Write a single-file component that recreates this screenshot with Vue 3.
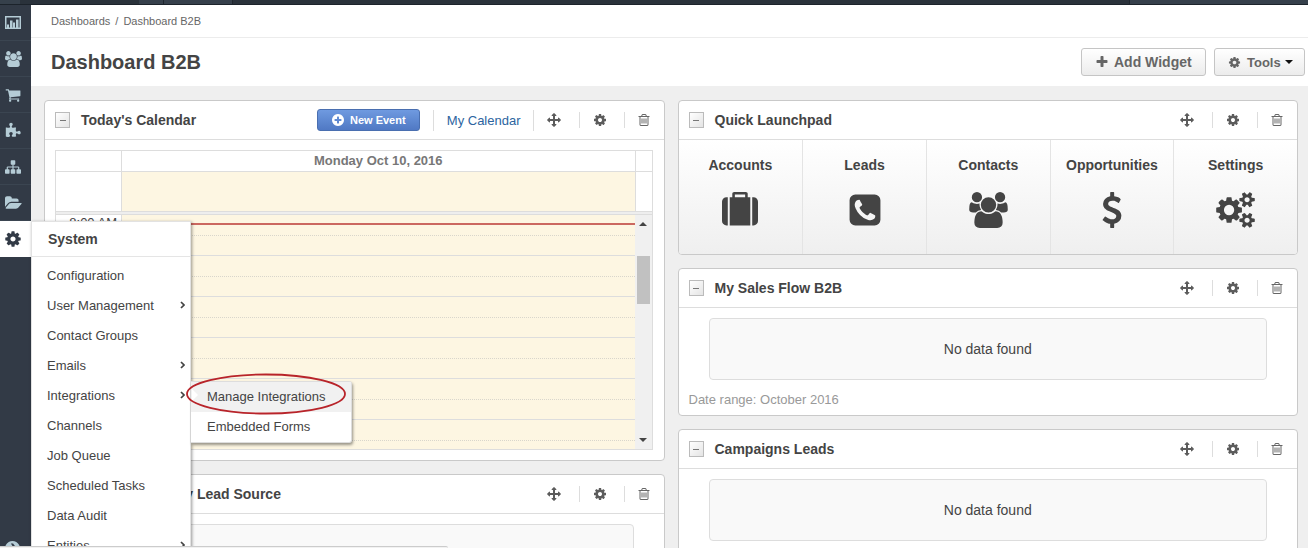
<script setup>
import { h } from 'vue'

const glyphs = {
  cog: [1792, 'M1152 896q0-106-75-181t-181-75-181 75-75 181 75 181 181 75 181-75 75-181zm512-109v222q0 12-8 23t-20 13l-185 28q-19 54-39 91 35 50 107 138 10 12 10 25t-9 23q-27 37-99 108t-94 71q-12 0-26-9l-138-108q-44 23-91 38-16 136-29 186-7 28-36 28h-222q-14 0-24.500-8.500t-11.500-21.500l-28-184q-49-16-90-37l-141 107q-10 9-25 9-14 0-25-11-126-114-165-168-7-10-7-23 0-12 8-23 15-21 51-66.500t54-70.500q-27-50-41-99l-183-27q-13-2-21-12.500t-8-23.500v-222q0-12 8-23t19-13l186-28q14-46 39-92-40-57-107-138-10-12-10-24 0-10 9-23 26-36 98.500-107.500t94.500-71.500q13 0 26 10l138 107q44-23 91-38 16-136 29-186 7-28 36-28h222q14 0 24.500 8.500t11.500 21.500l28 184q49 16 90 37l142-107q9-9 24-9 13 0 25 10 129 119 165 170 7 8 7 22 0 12-8 23-15 21-51 66.500t-54 70.500q26 50 41 98l183 28q13 2 21 12.500t8 23.500z'],
  plus: [1792, 'M1600 736v192q0 40-28 68t-68 28h-416v416q0 40-28 68t-68 28h-192q-40 0-68-28t-28-68v-416h-416q-40 0-68-28t-28-68v-192q0-40 28-68t68-28h416v-416q0-40 28-68t68-28h192q40 0 68 28t28 68v416h416q40 0 68 28t28 68z'],
  plusCircle: [1792, 'M1344 960v-128q0-26-19-45t-45-19h-256v-256q0-26-19-45t-45-19h-128q-26 0-45 19t-19 45v256h-256q-26 0-45 19t-19 45v128q0 26 19 45t45 19h256v256q0 26 19 45t45 19h128q26 0 45-19t19-45v-256h256q26 0 45-19t19-45zm320-64q0 209-103 385.500t-279.500 279.500-385.500 103-385.500-103-279.500-279.500-103-385.500 103-385.500 279.500-279.500 385.500-103 385.500 103 279.500 279.500 103 385.500z'],
  move: [1792, 'M1792 896q0 26-19 45l-256 256q-19 19-45 19t-45-19-19-45v-128h-384v384h128q26 0 45 19t19 45-19 45l-256 256q-19 19-45 19t-45-19l-256-256q-19-19-19-45t19-45 45-19h128v-384h-384v128q0 26-19 45t-45 19-45-19l-256-256q-19-19-19-45t19-45l256-256q19-19 45-19t45 19 19 45v128h384v-384h-128q-26 0-45-19t-19-45 19-45l256-256q19-19 45-19t45 19l256 256q19 19 19 45t-19 45-45 19h-128v384h384v-128q0-26 19-45t45-19 45 19l256 256q19 19 19 45z'],
  trash: [1792, 'M704 736v576q0 14-9 23t-23 9h-64q-14 0-23-9t-9-23v-576q0-14 9-23t23-9h64q14 0 23 9t9 23zm256 0v576q0 14-9 23t-23 9h-64q-14 0-23-9t-9-23v-576q0-14 9-23t23-9h64q14 0 23 9t9 23zm256 0v576q0 14-9 23t-23 9h-64q-14 0-23-9t-9-23v-576q0-14 9-23t23-9h64q14 0 23 9t9 23zm128 724v-948h-896v948q0 22 7 40.500t14.500 27 10.500 8.500h832q3 0 10.500-8.500t14.500-27 7-40.500zm-672-1076h448l-48-117q-7-9-17-11h-317q-10 2-17 11zm928 32v64q0 14-9 23t-23 9h-96v948q0 83-47 143.500t-113 60.500h-832q-66 0-113-58.500t-47-141.500v-952h-96q-14 0-23-9t-9-23v-64q0-14 9-23t23-9h309l70-167q15-37 54-63t79-26h320q40 0 79 26t54 63l70 167h309q14 0 23 9t9 23z'],
  chart: [1792, 'M0 112h1792v1456h-1792zM168 280v1120h1456v-1120zM224 1064h224v336h-224zM560 616h280v784h-280zM896 840h224v560h-224zM1232 504h280v896h-280z'],
  cart: [1792, 'M704 1536q0 52-38 90t-90 38-90-38-38-90 38-90 90-38 90 38 38 90zm896 0q0 52-38 90t-90 38-90-38-38-90 38-90 90-38 90 38 38 90zm128-1088v512q0 24-16.500 42.500t-40.500 21.500l-1044 122q13 60 13 70 0 16-24 64h920q26 0 45 19t19 45-19 45-45 19h-1024q-26 0-45-19t-19-45q0-11 8-31.500t16-36 21.500-40 15.500-29.500l-177-823h-204q-26 0-45-19t-19-45 19-45 45-19h256q16 0 28.500 6.500t19.500 15.500 13 24.500 8 26 5.500 29.500 4.500 26h1201q26 0 45 19t19 45z'],
  puzzle: [1792, 'M1755 1083q0 81-44.500 135t-123.500 54q-41 0-77.500-17.500t-59-38-56.500-38-71-17.500q-110 0-110 124 0 39 16 115t15 115v5q-22 0-33 1-34 3-97.500 11.500t-115.500 13.500-98 5q-61 0-103-26.500t-42-83.500q0-37 17.500-71t38-56.500 38-59 17.500-77.500q0-79-54-123.500t-135-44.500q-84 0-143 45.500t-59 127.500q0 43 15 83t33.500 64.500 33.500 53 15 50.500q0 45-46 89-37 35-117 35-95 0-245-24-9-2-27.500-4t-27.500-4l-13-2q-1 0-3-1-2 0-2-1v-1024q2 1 17.500 3.500t34 5 21.500 3.500q150 24 245 24 80 0 117-35 46-44 46-89 0-22-15-50.500t-33.500-53-33.500-64.500-15-83q0-82 59-127.500t144-45.500q80 0 134 44.500t54 123.500q0 41-17.500 77.500t-38 59-38 56.500-17.500 71q0 57 42 83.500t103 26.500q64 0 180-15t163-17v2q-1 2-3.500 17.500t-5 34-3.500 21.500q-24 150-24 245 0 80 35 117 44 46 89 46 22 0 50.500-15t53-33.500 64.500-33.500 83-15q82 0 127.500 59t45.500 143z'],
  sitemap: [1792, 'M1792 1248v320q0 40-28 68t-68 28h-320q-40 0-68-28t-28-68v-320q0-40 28-68t68-28h96v-192h-512v192h96q40 0 68 28t28 68v320q0 40-28 68t-68 28h-320q-40 0-68-28t-28-68v-320q0-40 28-68t68-28h96v-192h-512v192h96q40 0 68 28t28 68v320q0 40-28 68t-68 28h-320q-40 0-68-28t-28-68v-320q0-40 28-68t68-28h96v-192q0-52 38-90t90-38h512v-192h-96q-40 0-68-28t-28-68v-320q0-40 28-68t68-28h320q40 0 68 28t28 68v320q0 40-28 68t-68 28h-96v192h512q52 0 90 38t38 90v192h96q40 0 68 28t28 68z'],
  folder: [1920, 'M1879 952q0 31-31 66l-336 396q-43 51-120.500 86.500t-143.500 35.500h-1088q-34 0-60.500-13t-26.500-43q0-31 31-66l336-396q43-51 120.500-86.500t143.500-35.500h1088q34 0 60.500 13t26.500 43zm-343-344v160h-832q-94 0-197 47.500t-164 119.500l-337 396-5 6q0-4-.5-12.500t-.5-12.500v-960q0-92 66-158t158-66h320q92 0 158 66t66 158v32h544q92 0 158 66t66 158z'],
  users: [1920, 'M593 896q-162 5-265 128h-134q-82 0-138-40.500t-56-118.500q0-353 124-353 6 0 43.500 21t97.500 42.500 119 21.500q67 0 133-23-5 37-5 66 0 139 81 256zm1071 637q0 120-73 189.500t-194 69.500h-874q-121 0-194-69.500t-73-189.500q0-53 3.500-103.500t14-109 26.500-108.500 43-97.500 62-81 85.500-53.500 111.500-20q10 0 43 21.500t73 48 107 48 135 21.500 135-21.500 107-48 73-48 43-21.500q61 0 111.500 20t85.500 53.500 62 81 43 97.500 26.500 108.500 14 109 3.500 103.500zm-1024-1277q0 106-75 181t-181 75-181-75-75-181 75-181 181-75 181 75 75 181zm704 384q0 159-112.500 271.500t-271.500 112.500-271.500-112.500-112.500-271.500 112.500-271.500 271.500-112.500 271.500 112.500 112.500 271.500zm576 225q0 78-56 118.500t-138 40.500h-134q-103-123-265-128 81-117 81-256 0-29-5-66 66 23 133 23 59 0 119-21.500t97.500-42.500 43.500-21q124 0 124 353zm-128-609q0 106-75 181t-181 75-181-75-75-181 75-181 181-75 181 75 75 181z'],
  suitcase: [1792, 'M640 256h512v-128h-512v128zm-352 0v1408h-64q-92 0-158-66t-66-158v-960q0-92 66-158t158-66h64zm1120 0v1408h-1024v-1408h128v-160q0-40 28-68t68-28h576q40 0 68 28t28 68v160h128zm384 224v960q0 92-66 158t-158 66h-64v-1408h64q92 0 158 66t66 158z'],
  phone: [1792, 'M1408 1193q0-11-2-16t-18-16.500-40.500-25-47.500-26.500-45.500-25-28.500-15q-5-3-19-13t-25-15-21-5q-15 0-36.500 20.500t-39.500 45-38.500 45-33.500 20.500q-7 0-16.500-3.500t-15.500-6.500-17-9.500-14-8.500q-99-55-170-126.500t-127-170.500q-2-3-8.500-14t-9.500-17-6.500-15.500-3.500-16.500q0-13 20.500-33.500t45-38.500 45-39.500 20.500-36.500q0-10-5-21t-15-25-13-19q-3-6-15-28.500t-25-45.500-26.500-47.500-25-40.500-16.500-18-16-2q-48 0-101 22-46 21-80 94.500t-34 130.500q0 16 2.500 34t5 30.500 9 33 10 29.500 12.500 33 11 30q60 164 216.500 320.500t320.500 216.500q6 2 30 11t33 12.500 29.500 10 33 9 30.500 5 34 2.500q57 0 130.500-34t94.500-80q22-53 22-101zm256-777v960q0 119-84.500 203.500t-203.500 84.500h-960q-119 0-203.500-84.500t-84.500-203.500v-960q0-119 84.500-203.500t203.500-84.500h960q119 0 203.500 84.500t84.500 203.500z'],
  dollar: [1792, 'M1362 1185q0 153-99.500 263.500t-258.500 136.500v175q0 14-9 23t-23 9h-135q-13 0-22.500-9.500t-9.500-22.500v-175q-66-9-127.500-31t-101.500-44.500-74-48-46.500-37.500-17.500-18q-17-21-2-41l103-135q7-10 23-12 15-2 24 9l2 2q113 99 243 125 37 8 74 8 81 0 142.500-43t61.500-122q0-28-15-53t-33.500-42-58.500-37.500-66-32-80-32.500q-39-16-61.500-25t-61.500-26.500-62.500-31-56.500-35.500-53.500-42.500-43.500-49-35.500-58-21-66.500-8.500-78q0-138 98-242t255-134v-180q0-13 9.500-22.500t22.500-9.500h135q14 0 23 9t9 23v176q57 6 110.500 23t87 33.500 63.500 37.500 39 29 15 14q17 18 5 38l-81 146q-8 15-23 16-14 3-27-7-3-3-14.500-12t-39-26.500-58.500-32-74.500-26-85.500-11.500q-95 0-155 43t-60 111q0 26 8.500 48t29.500 41.500 39.500 33 56 31 60.500 27 70 27.500q53 20 81 31.500t76 35 75.500 42.500 62 50 53 63.500 31.500 76.500 13 94z'],
  cogs: [1920, 'M896 896q0-106-75-181t-181-75-181 75-75 181 75 181 181 75 181-75 75-181zm768 512q0-52-38-90t-90-38-90 38-38 90q0 53 37.500 90.500t90.500 37.500 90.500-37.500 37.500-90.500zm0-1024q0-52-38-90t-90-38-90 38-38 90q0 53 37.500 90.500t90.500 37.500 90.500-37.500 37.500-90.500zm-384 421v185q0 10-7 19.500t-16 10.500l-155 24q-11 35-32 76 34 48 90 115 7 11 7 20 0 12-7 19-23 30-82.500 89.500t-78.500 59.500q-11 0-21-7l-115-90q-37 19-77 31-11 108-23 155-7 24-30 24h-186q-11 0-20-7.500t-10-17.500l-23-153q-34-10-75-31l-118 89q-7 7-20 7-11 0-21-8-144-133-144-160 0-9 7-19 10-14 41-53t47-61q-23-44-35-82l-152-24q-10-1-17-9.500t-7-19.500v-185q0-10 7-19.500t16-10.500l155-24q11-35 32-76-34-48-90-115-7-11-7-20 0-12 7-20 22-30 82-89t79-59q11 0 21 7l115 90q34-18 77-32 11-108 23-154 7-24 30-24h186q11 0 20 7.500t10 17.500l23 153q34 10 75 31l118-89q8-7 20-7 11 0 21 8 144 133 144 160 0 8-7 19-12 16-42 54t-45 60q23 48 34 82l152 23q10 2 17 10.500t7 19.500zm640 533v140q0 16-149 31-12 27-30 52 51 113 51 138 0 4-4 7-122 71-124 71-8 0-46-47t-52-68q-20 2-30 2t-30-2q-14 21-52 68t-46 47q-2 0-124-71-4-3-4-7 0-25 51-138-18-25-30-52-149-15-149-31v-140q0-16 149-31 13-29 30-52-51-113-51-138 0-4 4-7 4-2 35-20t59-34 30-16q8 0 46 46.500t52 67.500q20-2 30-2t30 2q51-71 92-112l6-2q4 0 124 70 4 3 4 7 0 25-51 138 17 23 30 52 149 15 149 31zm0-1024v140q0 16-149 31-12 27-30 52 51 113 51 138 0 4-4 7-122 71-124 71-8 0-46-47t-52-68q-20 2-30 2t-30-2q-14 21-52 68t-46 47q-2 0-124-71-4-3-4-7 0-25 51-138-18-25-30-52-149-15-149-31v-140q0-16 149-31 13-29 30-52-51-113-51-138 0-4 4-7 4-2 35-20t59-34 30-16q8 0 46 46.500t52 67.500q20-2 30-2t30 2q51-71 92-112l6-2q4 0 124 70 4 3 4 7 0 25-51 138 17 23 30 52 149 15 149 31z'],
  expand: [1792, 'M896 0a896 896 0 1 0 1 0zM700 300l260 0 460 596-460 596-260 0 330-500h-760v-192h760z'],
}

const Icon = ({ name, size }) => {
  const [w, d] = glyphs[name]
  return h('svg', {
    viewBox: `0 0 ${w} 1792`, width: Math.round((w * size) / 1792), height: size,
    fill: 'currentColor', 'fill-rule': 'evenodd', 'aria-hidden': 'true', overflow: 'visible',
  }, [h('path', { d })])
}
Icon.props = ['name', 'size']

const CardActions = () =>
  h('div', { class: 'actions' }, [
    ['move', 'Move'], ['cog', 'Configure'], ['trash', 'Delete'],
  ].map(([name, label]) =>
    h('button', { type: 'button', class: 'action', 'aria-label': label }, [h(Icon, { name, size: 14 })])))

const sections = [
  ['chart', 'Dashboards'], ['users', 'Customers'], ['cart', 'Sales'],
  ['puzzle', 'Activities'], ['sitemap', 'Marketing'], ['folder', 'Reports'],
]
const menu = [
  { label: 'Configuration' },
  { label: 'User Management', more: true },
  { label: 'Contact Groups' },
  { label: 'Emails', more: true },
  { label: 'Integrations', more: true, children: ['Manage Integrations', 'Embedded Forms'] },
  { label: 'Channels' },
  { label: 'Job Queue' },
  { label: 'Scheduled Tasks' },
  { label: 'Data Audit' },
  { label: 'Entities', more: true },
]
const launch = [
  ['Accounts', 'suitcase'], ['Leads', 'phone'], ['Contacts', 'users'],
  ['Opportunities', 'dollar'], ['Settings', 'cogs'],
]
const hours = ['8:00 AM', '', '', '', '', '']
</script>

<template>
  <div class="shell">
    <div class="topbar"><span class="tab first"></span><span class="tab second"></span><span class="tab third"></span><span class="tab user"></span></div>
    <div class="body">
      <nav class="sidebar" aria-label="Main">
        <a v-for="[icon, label] in sections" :key="icon" href="#" class="side-item" :aria-label="label">
          <Icon :name="icon" :size="16" />
        </a>
        <div class="side-current">
          <a href="#" class="side-item active" aria-label="System"><Icon name="cog" :size="18" /></a>
          <div class="menu">
            <h2 class="menu-title">System</h2>
            <ul class="menu-list">
              <li v-for="item in menu" :key="item.label" class="menu-row">
                <a href="#" class="menu-link">
                  <span>{{ item.label }}</span>
                  <svg v-if="item.more" class="chevron" viewBox="0 0 5 8" width="5" height="8" aria-hidden="true">
                    <path d="M1 1l3 3-3 3" fill="none" stroke="currentColor" stroke-width="1.700" />
                  </svg>
                </a>
                <div v-if="item.children" class="submenu">
                  <a v-for="(sub, i) in item.children" :key="sub" href="#" class="sub-link" :class="{ hot: i === 0 }">{{ sub }}</a>
                  <svg class="marker" viewBox="0 0 160 42" width="160" height="42" aria-hidden="true">
                    <path d="M6 16l6 6-6 6z" fill="#fff" />
                    <ellipse cx="80" cy="21" rx="79" ry="19.500" fill="none" stroke="#b8242a" stroke-width="1.800" />
                  </svg>
                </div>
              </li>
            </ul>
          </div>
        </div>
        <button type="button" class="side-toggle" aria-label="Expand menu"><Icon name="expand" :size="15" /></button>
      </nav>

      <main class="main">
        <div class="crumbs"><a href="#">Dashboards</a><span>/</span><span>Dashboard B2B</span></div>
        <header class="page-head">
          <h1>Dashboard B2B</h1>
          <div class="page-tools">
            <button type="button" class="btn add"><Icon name="plus" :size="14" />Add Widget</button>
            <button type="button" class="btn tools"><Icon name="cog" :size="13" />Tools<i class="caret"></i></button>
          </div>
        </header>

        <div class="columns">
          <div class="column">
            <section class="card">
              <header class="card-head">
                <button type="button" class="fold" aria-label="Collapse"></button>
                <h2>Today's Calendar</h2>
                <button type="button" class="new-event"><Icon name="plusCircle" :size="14" />New Event</button>
                <a href="#" class="my-cal">My Calendar</a>
                <CardActions />
              </header>
              <div class="calendar">
                <div class="cal-row cal-head"><span></span><strong>Monday Oct 10, 2016</strong><span></span></div>
                <div class="cal-row cal-allday"><span></span><span class="tint"></span><span></span></div>
                <div class="cal-split"></div>
                <div class="cal-grid">
                  <div class="cal-hours">
                    <div v-for="(t, i) in hours" :key="i" class="hour"><span class="time">{{ t }}</span><span class="half"></span></div>
                    <div class="now"></div>
                  </div>
                  <div class="scroll"><i class="up"></i><i class="thumb"></i><i class="down"></i></div>
                </div>
              </div>
            </section>
            <section class="card">
              <header class="card-head">
                <button type="button" class="fold" aria-label="Collapse"></button>
                <h2>Opportunities by Lead Source</h2>
                <CardActions />
              </header>
              <div class="empty"></div>
            </section>
          </div>

          <div class="column">
            <section class="card">
              <header class="card-head">
                <button type="button" class="fold" aria-label="Collapse"></button>
                <h2>Quick Launchpad</h2>
                <CardActions />
              </header>
              <div class="launch">
                <a v-for="[label, icon] in launch" :key="label" href="#" class="launch-item">
                  <span>{{ label }}</span><Icon :name="icon" :size="36" />
                </a>
              </div>
            </section>
            <section class="card">
              <header class="card-head">
                <button type="button" class="fold" aria-label="Collapse"></button>
                <h2>My Sales Flow B2B</h2>
                <CardActions />
              </header>
              <div class="empty">No data found</div>
              <p class="range">Date range: October 2016</p>
            </section>
            <section class="card">
              <header class="card-head">
                <button type="button" class="fold" aria-label="Collapse"></button>
                <h2>Campaigns Leads</h2>
                <CardActions />
              </header>
              <div class="empty">No data found</div>
            </section>
          </div>
        </div>
      </main>
    </div>
    <div class="status"></div>
  </div>
</template>

<style>
body { margin: 0; background: #efefef; }
.actions { display: flex; align-items: center; }
.action {
  box-sizing: border-box; width: 46px; height: 16px; padding: 0 0 0 13px; border: 0;
  border-left: 1px solid #ddd; background: none; color: #5c5c5c;
  display: flex; align-items: center; cursor: pointer;
}
.action:first-child { border-left-color: transparent; }
.action:nth-child(2) { width: 45px; }
.action:last-child { width: 40px; padding-left: 12px; color: #666; }
</style>

<style scoped>
* { box-sizing: border-box; }
.shell {
  position: relative; height: 100vh; overflow: hidden; display: flex; flex-direction: column;
  font-family: "Liberation Sans", Arial, sans-serif; font-size: 13px; color: #444;
}
a { color: inherit; text-decoration: none; }
button { font-family: inherit; cursor: pointer; }
h1, h2, p, ul { margin: 0; padding: 0; }
svg { display: block; flex: none; }

.topbar { flex: none; height: 5px; display: flex; background: #2a323b; border-bottom: 1px solid #1c232b; }
.tab { background: #36404b; border-left: 1px solid #1f262e; }
.tab.first { width: 20px; border-left: 0; }
.tab.second { width: 24px; margin-left: 119px; border-left: 0; }
.tab.third { width: 70px; border-right: 1px solid #1f262e; }
.tab.user { width: 179px; margin-left: auto; }

.body { flex: 1; min-height: 0; display: flex; }
.sidebar {
  position: relative; z-index: 2; flex: none; width: 31px; background: #323a46;
  display: flex; flex-direction: column;
}
.side-item {
  height: 36px; padding-right: 5px; display: flex; align-items: center; justify-content: center;
  color: #b5ccd6; border-bottom: 1px solid #3b4551;
}
.side-item.active { background: #fff; color: #323a46; border-bottom: 0; }
.side-current { position: relative; }
.side-toggle {
  height: 7px; margin-top: auto; padding: 0 0 0 5px; border: 0; background: none; color: #b5ccd6;
  display: flex; align-items: flex-start;
}

.menu {
  position: absolute; left: 100%; top: 0; width: 160px; padding-bottom: 12px; background: #fff;
  border: 1px solid #e2e2e2; box-shadow: 1px 1px 3px rgba(0, 0, 0, .4);
}
.menu-title { height: 35px; padding-left: 16px; font-size: 14px; line-height: 34px; border-bottom: 1px solid #e5e5e5; }
.menu-list { list-style: none; padding-top: 3px; }
.menu-row { position: relative; }
.menu-link { height: 30px; padding: 0 5px 0 15px; display: flex; align-items: center; justify-content: space-between; }
.submenu {
  position: absolute; left: 159px; top: 1px; width: 161px; background: #fff;
  border: 1px solid #ddd; border-left: 0; border-radius: 0 3px 3px 0; box-shadow: 1px 2px 3px rgba(0, 0, 0, .4);
}
.sub-link { display: block; height: 30px; padding-left: 16px; line-height: 30px; }
.sub-link.hot { background: #f1f1f1; }
.marker { position: absolute; left: -5px; top: -9px; }

.main { flex: 1; min-width: 0; overflow: hidden; }
.crumbs {
  height: 33px; padding-left: 20px; display: flex; gap: 5px; align-items: center;
  background: #fff; border-bottom: 1px solid #ececec; font-size: 11px; color: #666;
}
.page-head {
  height: 48px; padding: 0 3px 0 20px; display: flex; align-items: center; justify-content: space-between;
  background: #fff;
}
h1 { font-size: 20px; }
.page-tools { display: flex; gap: 8px; }
.btn {
  height: 28px; display: flex; align-items: center; border: 1px solid #c5c5c5; border-radius: 3px;
  background: linear-gradient(#fff, #ececec); color: #666; font-weight: bold;
}
.add { width: 125px; padding: 0 0 0 13px; gap: 5px; font-size: 14px; }
.tools { width: 91px; padding: 0 0 0 13px; gap: 6px; font-size: 13px; }
.caret { margin-left: -2px; border: 4px solid transparent; border-top-color: #111; border-bottom: 0; }

.columns { display: flex; gap: 13px; padding: 14px 10px 14px 13px; align-items: flex-start; }
.column { flex: 1; min-width: 0; display: flex; flex-direction: column; gap: 13px; }
.card { background: #fff; border: 1px solid #c9c9c9; border-radius: 4px; overflow: hidden; }
.card:last-child { padding-bottom: 36px; }
.card-head { height: 39px; padding-left: 10px; display: flex; align-items: center; border-bottom: 1px solid #ddd; }
.card-head h2 { margin-left: 11px; margin-right: auto; font-size: 14px; white-space: nowrap; }
.fold {
  width: 15px; height: 16px; padding: 0; border: 1px solid #bbb; background: linear-gradient(135deg, #fff, #e4e4e4);
  display: flex; align-items: center; justify-content: center;
}
.fold::before { content: ""; width: 6px; height: 1px; background: #777; }
.new-event {
  width: 103px; height: 22px; padding: 0; display: flex; align-items: center; justify-content: center; gap: 5px;
  border: 1px solid #4a6fb0; border-radius: 3px; background: linear-gradient(#6f9ae0, #5079c4);
  color: #fff; font-size: 11px; font-weight: bold;
}
.my-cal {
  margin-left: 13px; padding: 0 12px 0 13px; line-height: 21px; color: #2c64a0;
  border: solid #ddd; border-width: 0 1px; margin-right: -1px;
}

.calendar { margin: 10px 11px 10px 10px; border: 1px solid #ddd; }
.cal-row { display: grid; grid-template-columns: 65px 1fr 17px; border-bottom: 1px solid #ddd; }
.cal-row > * + * { border-left: 1px solid #ddd; }
.cal-head { height: 21px; line-height: 19px; text-align: center; color: #777; }
.cal-allday { height: 40px; }
.tint { background: #fdf6e2; }
.cal-split { height: 3px; background: #eee; border-bottom: 1px solid #ddd; }
.cal-grid { display: flex; height: 234px; overflow: hidden; }
.cal-hours { position: relative; flex: 1; }
.hour { height: 41px; display: grid; grid-template-columns: 65px 1fr; border-bottom: 1px solid #ddd; }
.time { padding-right: 4px; text-align: right; line-height: 16px; }
.half {
  border-left: 1px solid #ddd;
  background: repeating-linear-gradient(90deg, #d9d6cc 0 1px, transparent 1px 2px) 0 20px / 100% 1px no-repeat #fdf6e2;
}
.now { position: absolute; left: 66px; right: 0; top: 8px; height: 2px; background: #cb6860; }
.scroll { width: 17px; padding: 7px 2px; display: flex; flex-direction: column; align-items: center; background: #f0f0f0; }
.scroll i { flex: none; }
.up, .down { border: 4px solid transparent; }
.up { border-top: 0; border-bottom-color: #444; }
.down { margin-top: auto; border-bottom: 0; border-top-color: #444; }
.thumb { width: 100%; height: 48px; margin-top: 30px; background: #c1c1c1; }

.empty {
  height: 62px; margin: 10px 30px 0; display: flex; align-items: center; justify-content: center;
  border: 1px solid #ddd; border-radius: 4px; background: #f9f9f9; font-size: 14px;
}
.range { padding: 11px 10px 6px; line-height: 18px; color: #999; }

.launch { display: grid; grid-template-columns: repeat(5, 1fr); height: 114px; background: linear-gradient(#fff, #efefef); }
.launch-item {
  display: flex; flex-direction: column; align-items: center; gap: 18px; padding-top: 17px;
  font-size: 14px; font-weight: bold; line-height: 17px; border-left: 1px solid #e4e4e4;
}
.launch-item:first-child { border-left: 0; }

.status {
  position: absolute; z-index: 3; left: 0; bottom: 0; width: 448px; height: 2px;
  background: #f2f2f2; border-top: 1px solid #ccc; border-radius: 0 3px 0 0;
}
</style>
